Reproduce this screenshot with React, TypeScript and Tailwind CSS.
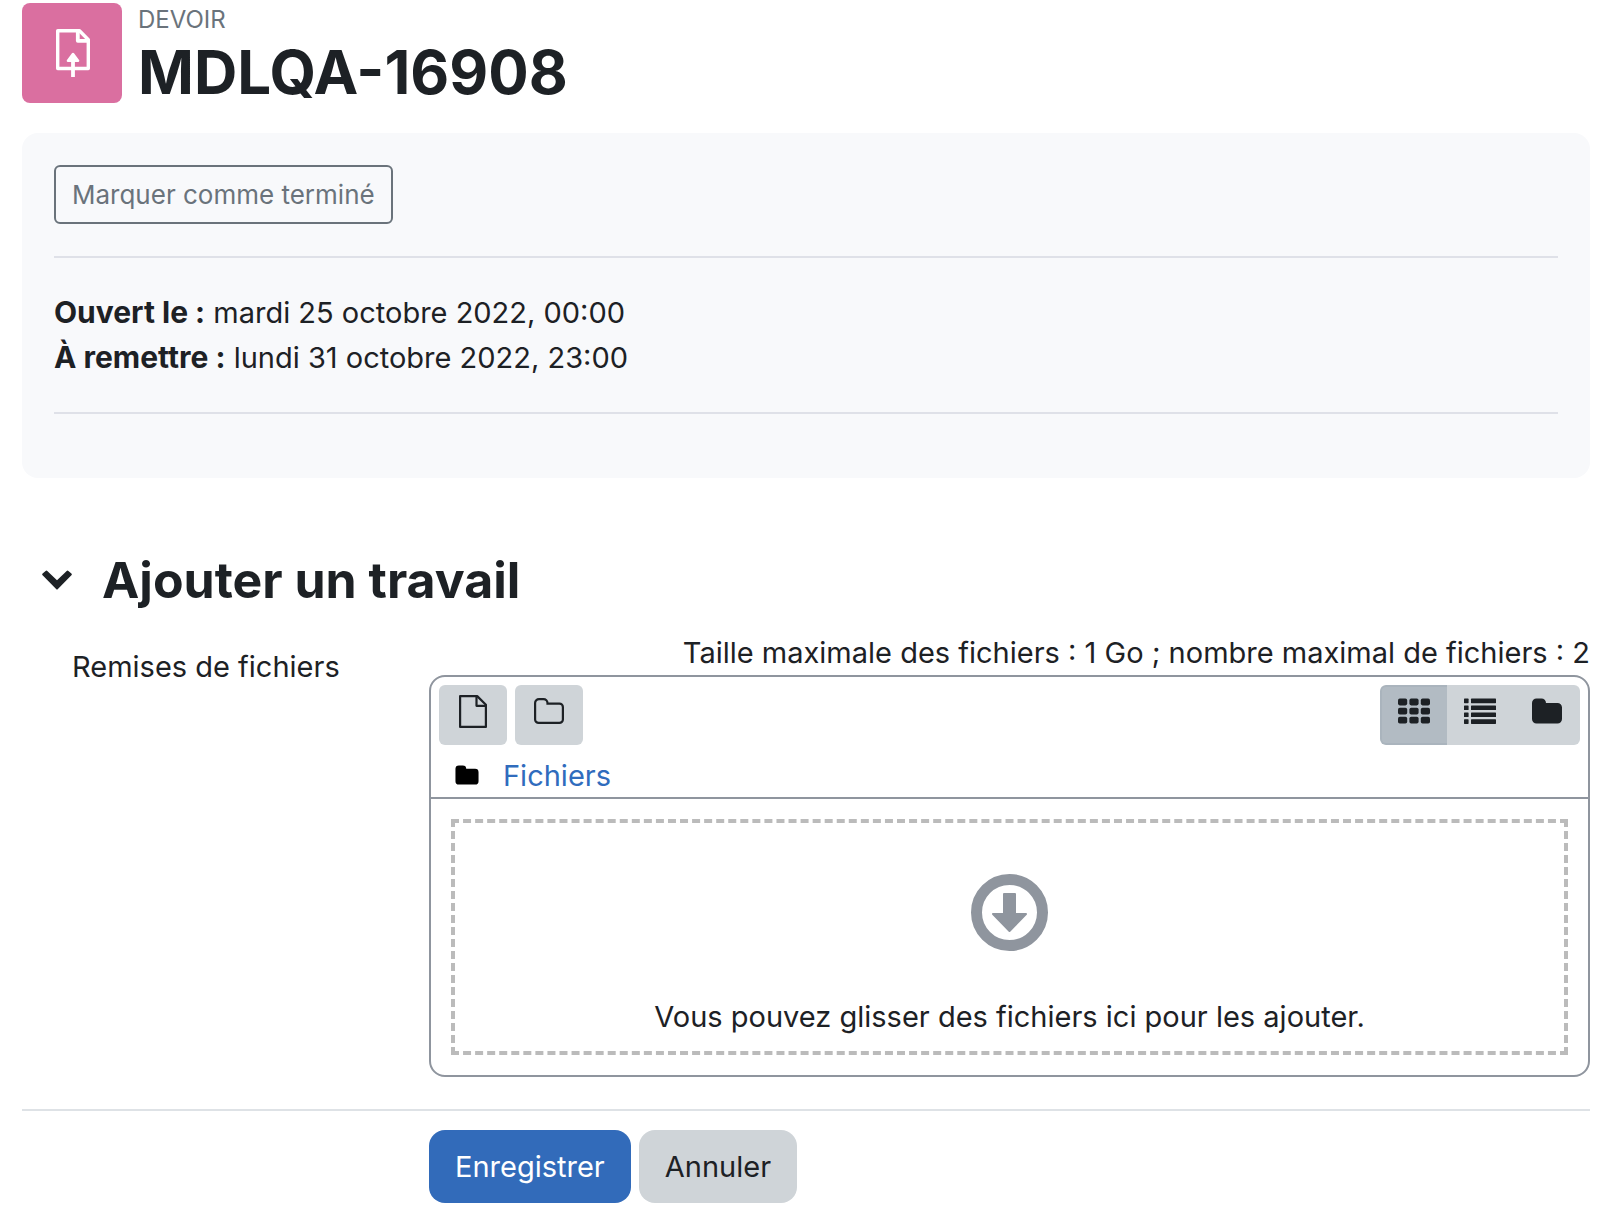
import { useState } from "react";
import clsx from "clsx";

type ViewMode = "icons" | "list" | "tree";

function AssignIcon() {
	return (
		<svg
			width="36"
			height="48"
			viewBox="-2 0 36 48"
			fill="none"
			stroke="white"
			strokeWidth="3.4"
			strokeLinejoin="round"
			strokeLinecap="round"
			aria-hidden="true"
		>
			<path d="M1.7 1.7H23.5L32.3 10.8V39.5H1.7Z" />
			<path d="M21.8 2V11.8H32" strokeWidth="3.8" />
			<path d="M17 30V48" strokeWidth="3.8" strokeLinecap="butt" />
			<path d="M17 25L12 31.8H22Z" fill="white" strokeWidth="2.6" />
		</svg>
	);
}

function ChevronIcon() {
	return (
		<svg width="30" height="20" viewBox="0 0 30 20" fill="currentColor" aria-hidden="true">
			<path d="M0.600 5.300a1.200 1.200 0 0 1 0-1.700L3.600 0.900a1.200 1.200 0 0 1 1.700 0L15 10.300L24.700 0.900a1.200 1.200 0 0 1 1.700 0L29.400 3.600a1.200 1.200 0 0 1 0 1.700L15.900 19a1.200 1.200 0 0 1-1.800 0Z" />
		</svg>
	);
}

function FileIcon() {
	return (
		<svg
			width="28"
			height="33"
			viewBox="0 0 28 33"
			fill="none"
			stroke="currentColor"
			strokeWidth="2.2"
			strokeLinejoin="round"
			aria-hidden="true"
		>
			<path d="M1.100 1.100H18.200L26.900 9.800V31.900H1.100Z" />
			<path d="M17.500 1V10.800H27" />
		</svg>
	);
}

function FolderOutlineIcon() {
	return (
		<svg
			width="30"
			height="26"
			viewBox="0 0 30 26"
			fill="none"
			stroke="currentColor"
			strokeWidth="2.2"
			aria-hidden="true"
		>
			<path d="M1.100 5a3.900 3.900 0 0 1 3.900-3.900h4.500a4 4 0 0 1 4 4v.5H25.400a3.500 3.500 0 0 1 3.500 3.500v12.300a3.500 3.500 0 0 1-3.500 3.500H4.600A3.500 3.500 0 0 1 1.100 21.400Z" />
		</svg>
	);
}

function FolderIcon({ className }: { className?: string }) {
	return (
		<svg
			viewBox="0 0 30 26"
			fill="currentColor"
			className={className}
			aria-hidden="true"
		>
			<path d="M0 5a4.500 4.500 0 0 1 4.500-4.500h5a4.500 4.500 0 0 1 4.500 4.500h11.500a4.500 4.500 0 0 1 4.500 4.500v11.500a4.500 4.500 0 0 1-4.500 4.500h-21a4.500 4.500 0 0 1-4.500-4.500Z" />
		</svg>
	);
}

function GridIcon() {
	return (
		<svg width="32" height="26" viewBox="0 0 32 26" fill="currentColor" aria-hidden="true">
			{[0.6, 9.7, 18.8].map((y) =>
				[0, 11.4, 22.8].map((x) => (
					<rect key={`${x}-${y}`} x={x} y={y} width="9.2" height="6.8" rx="1.8" />
				)),
			)}
		</svg>
	);
}

function ListIcon() {
	return (
		<svg width="32" height="26" viewBox="0 0 32 26" fill="currentColor" aria-hidden="true">
			{[0.6, 7.5, 14.4, 21.3].map((y) => (
				<g key={y}>
					<rect x="0" y={y} width="4.6" height="4.6" rx="0.6" />
					<rect x="7" y={y} width="25" height="4.6" rx="0.6" />
				</g>
			))}
		</svg>
	);
}

function DropArrowIcon() {
	return (
		<svg width="78" height="78" viewBox="0 0 78 78" aria-hidden="true">
			<circle cx="38.5" cy="38.5" r="33" fill="none" stroke="#8f959e" strokeWidth="11" />
			<path
				d="M33 20H44V40H55L38.5 57L22 40H33Z"
				fill="#8f959e"
				stroke="#8f959e"
				strokeWidth="2"
				strokeLinejoin="round"
			/>
		</svg>
	);
}

const views: { id: ViewMode; label: string; icon: React.ReactNode }[] = [
	{ id: "icons", label: "Afficher sous forme d'icônes", icon: <GridIcon /> },
	{ id: "list", label: "Afficher sous forme de liste", icon: <ListIcon /> },
	{
		id: "tree",
		label: "Afficher sous forme d'arborescence",
		icon: <FolderIcon className="w-[30px] h-[26px]" />,
	},
];

const dates = [
	{ label: "Ouvert le :", value: "mardi 25 octobre 2022, 00:00" },
	{ label: "À remettre :", value: "lundi 31 octobre 2022, 23:00" },
];

function PageHeader() {
	return (
		<header className="flex gap-4">
			<div className="w-[100px] h-[100px] shrink-0 rounded-lg bg-[#da6fa0] flex items-center justify-center">
				<AssignIcon />
			</div>
			<div>
				<div className="text-[24px] leading-[34px] text-[#6a737b] uppercase">Devoir</div>
				<h1 className="text-[60px] leading-[70px] font-bold">MDLQA-16908</h1>
			</div>
		</header>
	);
}

function ActivityInfo() {
	return (
		<section className="mt-[26px] rounded-2xl bg-[#f8f9fb] px-8 pt-8 pb-16">
			<button
				type="button"
				className="block rounded-md border-2 border-[#6a737b] px-4 h-[59px] text-[26px] text-[#6a737b]"
			>
				Marquer comme terminé
			</button>
			<hr className="my-8 border-t-2 border-[#dfe1e8]" />
			{dates.map((date) => (
				<div key={date.label} className="leading-[45px]">
					<strong className="text-[30px] font-bold">{date.label}</strong> {date.value}
				</div>
			))}
			<hr className="mt-8 border-t-2 border-[#dfe1e8]" />
		</section>
	);
}

function FileManager() {
	const [view, setView] = useState<ViewMode>("icons");

	return (
		<div className="rounded-2xl border-2 border-[#8f959e]">
			<div className="flex justify-between p-2">
				<div className="flex gap-2">
					<button
						type="button"
						aria-label="Ajouter..."
						className="w-[68px] h-[60px] pb-2 rounded-md bg-[#cfd4d8] flex items-center justify-center"
					>
						<FileIcon />
					</button>
					<button
						type="button"
						aria-label="Créer un dossier"
						className="w-[68px] h-[60px] pb-2 rounded-md bg-[#cfd4d8] flex items-center justify-center"
					>
						<FolderOutlineIcon />
					</button>
				</div>
				<div className="grid grid-cols-3 w-[200px] rounded-md overflow-hidden bg-[#cfd4d8]">
					{views.map((item) => (
						<button
							key={item.id}
							type="button"
							aria-label={item.label}
							aria-pressed={view === item.id}
							onClick={() => setView(item.id)}
							className={clsx(
								"h-[60px] pb-2 flex items-center justify-center",
								view === item.id &&
									"bg-[#b2bbc3] border-y-2 border-l-2 border-[#aab4bd] first:rounded-l-md",
							)}
						>
							{item.icon}
						</button>
					))}
				</div>
			</div>
			<nav className="flex items-center gap-6 h-[46px] pl-6 border-b-2 border-[#8f959e]">
				<FolderIcon className="w-[24px] h-[20px] text-black" />
				<a href="#" className="text-[#306cbd]">
					Fichiers
				</a>
			</nav>
			<div className="p-5">
				<div className="h-[236px] border-4 border-dashed border-[#bbbbbb] flex flex-col items-center justify-between pt-[51px] pb-3">
					<DropArrowIcon />
					<div className="leading-[45px]">
						Vous pouvez glisser des fichiers ici pour les ajouter.
					</div>
				</div>
			</div>
		</div>
	);
}

export default function App() {
	const [open, setOpen] = useState(true);

	return (
		<main className="pl-[22px] pr-[26px] pt-[3px] pb-6 bg-white text-[#1d2125] text-[29px] leading-[45px] font-[Inter,'Liberation_Sans',sans-serif]">
			<PageHeader />
			<ActivityInfo />
			<form className="mt-[70px]" onSubmit={(e) => e.preventDefault()}>
				<div className="flex items-center gap-[30px] pl-5 h-16">
					<button
						type="button"
						aria-label="Replier"
						aria-expanded={open}
						onClick={() => setOpen(!open)}
					>
						<ChevronIcon />
					</button>
					<h2 className="text-[50px] leading-[60px] font-bold">Ajouter un travail</h2>
				</div>
				{open && (
					<div className="grid grid-cols-[407px_1fr] mt-[18px]">
						<div className="pl-[50px] pt-[14px]">Remises de fichiers</div>
						<div>
							<div className="text-right">
								Taille maximale des fichiers : 1 Go ; nombre maximal de fichiers : 2
							</div>
							<FileManager />
						</div>
					</div>
				)}
				<hr className="mt-8 border-t-2 border-[#dee2e6]" />
				<div className="flex gap-2 mt-[19px] pl-[407px]">
					<button
						type="submit"
						className="h-[73px] px-[26px] rounded-2xl bg-[#326bba] text-white"
					>
						Enregistrer
					</button>
					<button type="button" className="h-[73px] px-[26px] rounded-2xl bg-[#cfd4d8]">
						Annuler
					</button>
				</div>
			</form>
		</main>
	);
}
